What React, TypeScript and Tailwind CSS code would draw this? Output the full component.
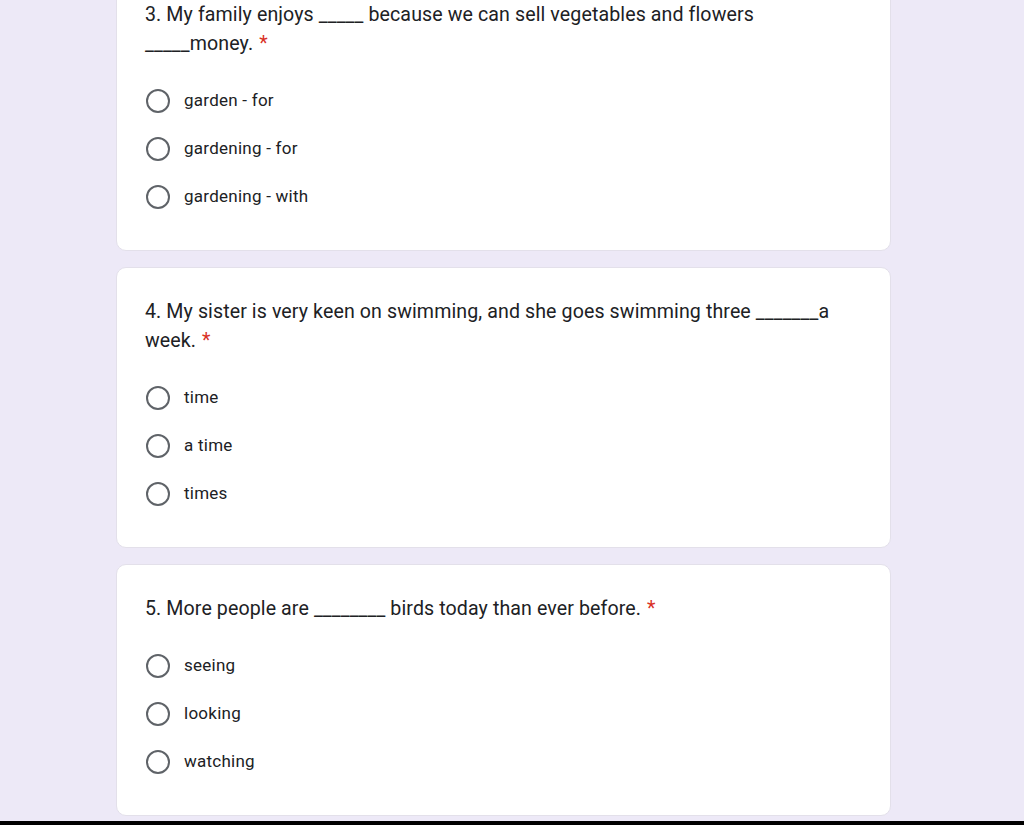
const questions = [
  {
    lines: ["3. My family enjoys _____ because we can sell vegetables and flowers", "_____money."],
    options: ["garden - for", "gardening - for", "gardening - with"],
  },
  {
    lines: ["4. My sister is very keen on swimming, and she goes swimming three _______a", "week."],
    options: ["time", "a time", "times"],
  },
  {
    lines: ["5. More people are ________ birds today than ever before."],
    options: ["seeing", "looking", "watching"],
  },
];

function QuestionCard({ lines, options }: { lines: string[]; options: string[] }) {
  return (
    <div className="bg-white rounded-[10px] border border-[#e3e0ea] px-[28px] pt-[29px] pb-[29px]">
      <div className="text-[19.6px] leading-[29px] tracking-[0.1px] text-[#202124] font-['Roboto',sans-serif]">
        {lines.map((line, i) => (
          <div key={i} className="flex items-baseline gap-[6px]">
            <span>{line}</span>
            {i === lines.length - 1 && <span className="text-[#d93025]">*</span>}
          </div>
        ))}
      </div>
      <div className="mt-[19px] flex flex-col">
        {options.map((opt) => (
          <label key={opt} className="h-[48px] flex items-center gap-[14px] cursor-pointer">
            <span className="w-[24px] h-[24px] ml-[1px] rounded-full border-2 border-[#5f6368] shrink-0" />
            <span className="text-[17px] tracking-[0.25px] text-[#202124] font-['Roboto',sans-serif]">{opt}</span>
          </label>
        ))}
      </div>
    </div>
  );
}

export default function App() {
  return (
    <div className="h-[825px] overflow-hidden bg-[#ede9f7] flex flex-col">
      <div className="flex-1 overflow-hidden">
        <div className="w-[775px] ml-[116px] -mt-[30px] flex flex-col gap-[16px]">
          {questions.map((q) => (
            <QuestionCard key={q.lines[0]} lines={q.lines} options={q.options} />
          ))}
        </div>
      </div>
      <div className="h-[4px] bg-black" />
    </div>
  );
}
